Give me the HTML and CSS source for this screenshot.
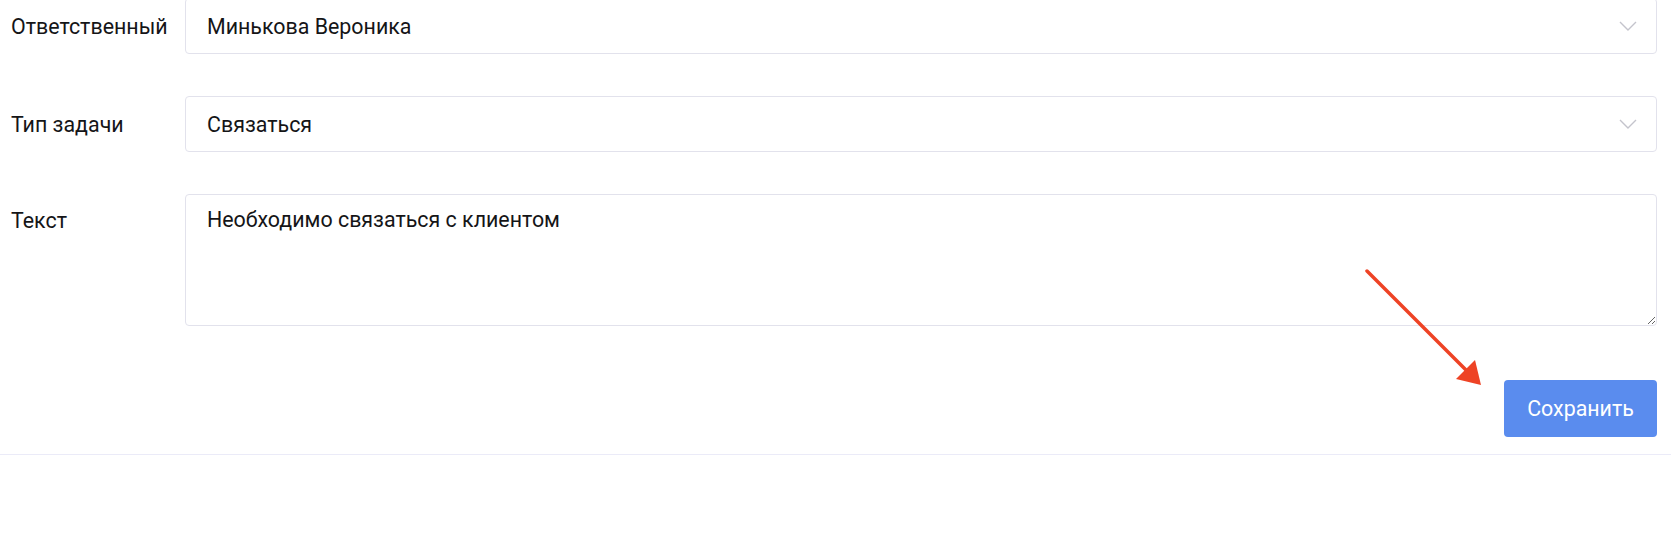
FILE: index.html
```html
<!DOCTYPE html>
<html lang="ru">
<head>
  <meta charset="UTF-8" />
  <title>Задача</title>
  <link rel="stylesheet" href="styles.css">
</head>
<body>
  <form class="task-form">
    <div class="form-row">
      <label class="form-label">Ответственный</label>
      <div class="select">
        <span class="select-value">Минькова Вероника</span>
        <svg class="chevron" width="18" height="10" viewBox="0 0 18 10"><path d="M1 1 L9 9 L17 1" fill="none" stroke="#c4c4cc" stroke-width="1.4"/></svg>
      </div>
    </div>

    <div class="form-row">
      <label class="form-label">Тип задачи</label>
      <div class="select">
        <span class="select-value">Связаться</span>
        <svg class="chevron" width="18" height="10" viewBox="0 0 18 10"><path d="M1 1 L9 9 L17 1" fill="none" stroke="#c4c4cc" stroke-width="1.4"/></svg>
      </div>
    </div>

    <div class="form-row form-row-top">
      <label class="form-label" for="text">Текст</label>
      <textarea id="text" class="textarea">Необходимо связаться с клиентом</textarea>
    </div>

    <div class="form-actions">
      <button type="button" class="btn-save">Сохранить</button>
      <svg class="pointer-arrow" width="130" height="130" viewBox="0 0 130 130">
        <line x1="2" y1="2" x2="104" y2="104" stroke="#ee4325" stroke-width="3.5" stroke-linecap="round"/>
        <polygon points="116,116 91,110 110,91" fill="#ee4325"/>
      </svg>
    </div>
  </form>
  <div class="divider"></div>
</body>
</html>
```

FILE: styles.css
```css
body {
  margin: 0;
  padding: 0 23px 0 11px;
  background: #fff;
  color: #151517;
  font-family: Roboto, "Noto Sans", sans-serif;
  font-size: 21.4px;
}

.task-form {
  display: flex;
  flex-direction: column;
  gap: 42px;
  margin-top: -2px;
}

.form-row {
  display: grid;
  grid-template-columns: 174px 1fr;
  align-items: center;
}

.form-row-top {
  align-items: start;
}

.form-row-top .form-label {
  padding-top: 14px;
}

.form-label {
  margin: 0;
}

.select {
  display: flex;
  align-items: center;
  justify-content: space-between;
  height: 56px;
  box-sizing: border-box;
  padding: 0 19px 0 21px;
  border: 1px solid #e2e2ec;
  border-radius: 4px;
}

.textarea {
  display: block;
  box-sizing: border-box;
  width: 100%;
  height: 132px;
  margin: 0;
  padding: 12px 21px;
  border: 1px solid #e2e2ec;
  border-radius: 4px;
  font-family: inherit;
  font-size: inherit;
  color: inherit;
  resize: vertical;
}

.form-actions {
  position: relative;
  display: flex;
  justify-content: flex-end;
  margin-top: 12px;
}

.btn-save {
  width: 153px;
  height: 57px;
  border: none;
  border-radius: 4px;
  background: #5a8cee;
  color: #fff;
  font-family: inherit;
  font-size: inherit;
}

.pointer-arrow {
  position: absolute;
  right: 162px;
  top: -111px;
}

.divider {
  height: 1px;
  margin: 17px -14px 0 -11px;
  background: #ebebf8;
}
```
